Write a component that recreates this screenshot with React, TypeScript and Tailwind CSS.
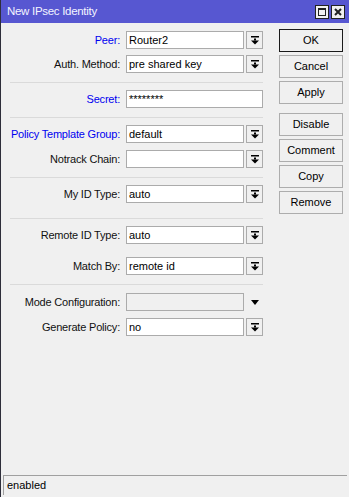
import React from "react";

const font = { fontFamily: '"Liberation Sans", Arial, sans-serif' };

function DropIcon() {
  return (
    <svg width="8" height="9" viewBox="0 0 8 9">
      <rect x="0" y="0" width="8" height="1.5" fill="#000" />
      <rect x="3" y="2.5" width="2" height="2" fill="#000" />
      <polygon points="0,4.5 8,4.5 4,8.5" fill="#000" />
    </svg>
  );
}

function Label({ text, blue }: { text: string; blue?: boolean }) {
  return (
    <div
      className={`w-[110px] shrink-0 text-right text-[11px] leading-[18px] tracking-[-0.2px] ${
        blue ? "text-[#0000f0]" : "text-[#111]"
      }`}
    >
      {text}
    </div>
  );
}

function SelectRow({
  label,
  value,
  blue,
  mt,
}: {
  label: string;
  value: string;
  blue?: boolean;
  mt: string;
}) {
  return (
    <div className={`flex h-[18px] items-center ${mt}`}>
      <Label text={label} blue={blue} />
      <div className="ml-[6px] h-[18px] w-[118px] border border-[#ababab] bg-white pl-[2px] text-[11px] leading-[16px] text-black">
        {value}
      </div>
      <div className="ml-[2px] flex h-[18px] w-[17px] items-center justify-center border border-[#ababab] bg-[#f0f0f0]">
        <DropIcon />
      </div>
    </div>
  );
}

function Sep({ mt }: { mt: string }) {
  return <div className={`h-px w-[253px] bg-[#dadada] ${mt}`} />;
}

function Btn({ text, ok, mt }: { text: string; ok?: boolean; mt?: string }) {
  return (
    <div
      className={`flex h-[23px] w-[64px] items-center justify-center border bg-[#f0f0f0] text-[11px] text-black ${
        ok ? "border-[#1a1a1a]" : "border-[#adadad]"
      } ${mt ?? ""}`}
    >
      {text}
    </div>
  );
}

export default function App() {
  return (
    <div
      className="flex h-[497px] w-[349px] flex-col border-l border-[#2e2e3a] bg-[#f0f0f0]"
      style={font}
    >
      {/* Title bar */}
      <div className="flex h-[23px] shrink-0 items-center bg-[#5757d1] pl-[6px] pr-[4px]">
        <div className="text-[11.5px] tracking-[-0.3px] text-[#f4f4ff]">New IPsec Identity</div>
        <div className="ml-auto flex gap-[2px]">
          <div className="flex h-[14px] w-[14px] items-center justify-center border border-[#222] bg-[#f0f0f0]">
            <div className="h-[8px] w-[8px] border border-t-2 border-[#222]" />
          </div>
          <div className="flex h-[14px] w-[14px] items-center justify-center border border-[#222] bg-[#f0f0f0]">
            <svg width="8" height="8" viewBox="0 0 8 8">
              <path d="M1 1 L7 7 M7 1 L1 7" stroke="#222" strokeWidth="2" />
            </svg>
          </div>
        </div>
      </div>

      {/* Body */}
      <div className="flex flex-1">
        <div className="flex w-[263px] flex-col pl-[9px]">
          <SelectRow label="Peer:" value="Router2" blue mt="mt-[8px]" />
          <SelectRow label="Auth. Method:" value="pre shared key" mt="mt-[6px]" />
          <Sep mt="mt-[9px]" />
          <div className="mt-[7px] flex h-[18px] items-center">
            <Label text="Secret:" blue />
            <div className="ml-[6px] h-[18px] w-[137px] border border-[#ababab] bg-white pl-[2px] text-[11px] leading-[16px] text-black">
              ********
            </div>
          </div>
          <Sep mt="mt-[9px]" />
          <SelectRow label="Policy Template Group:" value="default" blue mt="mt-[7px]" />
          <SelectRow label="Notrack Chain:" value="" mt="mt-[7px]" />
          <Sep mt="mt-[9px]" />
          <SelectRow label="My ID Type:" value="auto" mt="mt-[7px]" />
          <Sep mt="mt-[15px]" />
          <SelectRow label="Remote ID Type:" value="auto" mt="mt-[7px]" />
          <SelectRow label="Match By:" value="remote id" mt="mt-[13px]" />
          <Sep mt="mt-[9px]" />
          <div className="mt-[8px] flex h-[18px] items-center">
            <Label text="Mode Configuration:" />
            <div className="ml-[6px] h-[18px] w-[118px] border border-[#ababab] bg-[#f0f0f0]" />
            <div className="ml-[2px] flex h-[18px] w-[17px] items-center justify-center">
              <svg width="8" height="5" viewBox="0 0 8 5">
                <polygon points="0,0 8,0 4,5" fill="#000" />
              </svg>
            </div>
          </div>
          <SelectRow label="Generate Policy:" value="no" mt="mt-[7px]" />
        </div>

        <div className="ml-[15px] flex flex-col pt-[6px]">
          <Btn text="OK" ok />
          <Btn text="Cancel" mt="mt-[3px]" />
          <Btn text="Apply" mt="mt-[3px]" />
          <Btn text="Disable" mt="mt-[9px]" />
          <Btn text="Comment" mt="mt-[3px]" />
          <Btn text="Copy" mt="mt-[3px]" />
          <Btn text="Remove" mt="mt-[3px]" />
        </div>
      </div>

      {/* Status bar */}
      <div className="mb-[2px] ml-[2px] mr-[2px] flex h-[20px] shrink-0 items-center border-l border-t border-[#a0a0a0] pl-[3px] text-[11px] text-black">
        enabled
      </div>
    </div>
  );
}
